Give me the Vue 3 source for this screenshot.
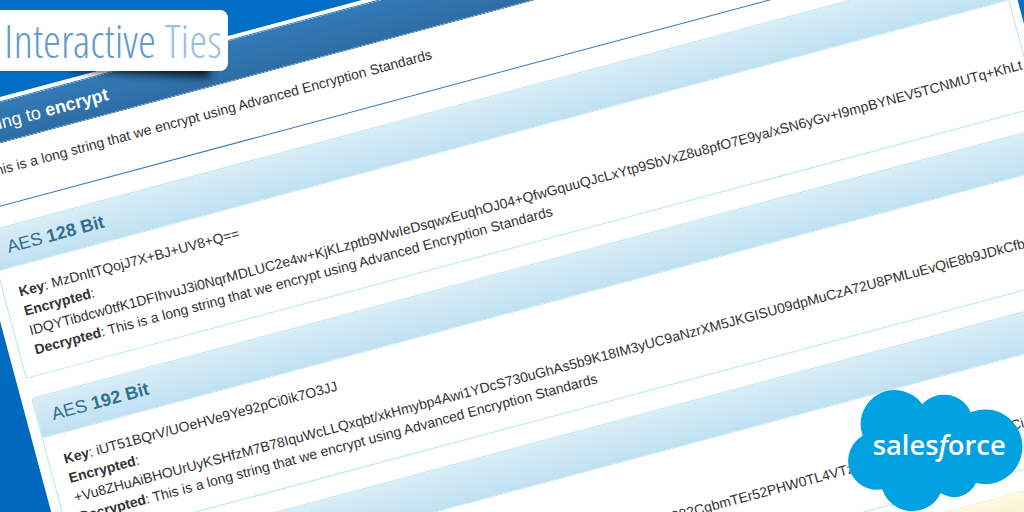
<script setup>
const source = 'This is a long string that we encrypt using Advanced Encryption Standards'

const results = [
  {
    bits: 128,
    key: 'MzDnItTQojJ7X+BJ+UV8+Q==',
    encrypted: 'IDQYTibdcw0tfK1DFIhvuJ3i0NqrMDLUC2e4w+KjKLzptb9WwIeDsqwxEuqhOJ04+QfwGquuQJcLxYtp9SbVxZ8u8pfO7E9ya/xSN6yGv+I9mpBYNEV5TCNMUTq+KhLt'
  },
  {
    bits: 192,
    key: 'iUT51BQrV/UOeHVe9Ye92pCi0ik7O3JJ',
    encrypted: '+Vu8ZHuAiBHOUrUyKSHfzM7B78IquWcLLQxqbt/xkHmybp4Awi1YDcS730uGhAs5b9K18IM3yUC9aNzrXM5JKGISU09dpMuCzA72U8PMLuEvQiE8b9JDkCfb'
  },
  {
    bits: 256,
    key: 'p8Kx2mQvT5uYh0sWc7RjZb3LfN6aGd1e',
    encrypted: 'n4Xw8aTzK2LrVYc0uPq7JmDhS5bEoGf1iRk9WtMsBx3NyZeHvCj6QdUpAl+gFO28rIwTcKL982CgbmTEr52PHW0TL4VTzq8RkN3vYs0JdWf5uHxkBCi'
  }
]
</script>

<template>
  <div class="stage">
    <main class="sheet">
      <section class="panel primary">
        <h3 class="heading">String to <b>encrypt</b></h3>
        <div class="body">
          <p class="source">{{ source }}</p>
        </div>
      </section>

      <section v-for="result in results" :key="result.bits" class="panel info">
        <h3 class="heading">AES <b>{{ result.bits }} Bit</b></h3>
        <div class="body">
          <div><b>Key</b>: {{ result.key }}</div>
          <div><b>Encrypted</b>:</div>
          <div class="cipher">{{ result.encrypted }}</div>
          <div><b>Decrypted</b>: {{ source }}</div>
        </div>
      </section>

      <section class="panel warning">
        <h3 class="heading">Notes</h3>
      </section>
    </main>

    <header class="brand">
      <span class="brand-name">Interactive <span class="brand-tail">Ties</span></span>
    </header>

    <svg class="cloud" viewBox="0 0 552 396" role="img" aria-label="salesforce">
      <path
        fill="#00a1e0"
        d="M68 167 A102 102 0 0 1 247 73 A87 87 0 0 1 392 97 A112 112 0 1 1 408 309 A72 72 0 0 1 302 339 A94 94 0 0 1 127 328 A87 87 0 0 1 68 167 Z"
      />
      <text class="cloud-text" x="98" y="224">sales<tspan font-style="italic">f</tspan>orce</text>
    </svg>
  </div>
</template>

<style>
body {
  margin: 0;
}
</style>

<style scoped>
.stage {
  position: relative;
  height: 100vh;
  min-height: 512px;
  overflow: hidden;
  background: linear-gradient(to top, #0068bd, #006fc5);
  font-family: "Liberation Sans", Arial, sans-serif;
  font-size: 14px;
  line-height: 20px;
  color: #333;
}

/* the result page, tilted behind the two logos */
.sheet {
  display: flow-root;
  box-sizing: border-box;
  width: calc(100vw + 42px);
  margin: 112px 0 0 -56px;
  padding: 4px 8px 10px 10px;
  background: #fff;
  transform: rotate(-15deg);
  transform-origin: 0 0;
}

.panel {
  margin-bottom: 20px;
  border: 1px solid;
  border-radius: 4px;
  background: #fff;
}

.heading {
  margin: 0;
  padding: 10px 15px;
  border-bottom: 1px solid;
  border-radius: 3px 3px 0 0;
  font-size: 18px;
  font-weight: 400;
  line-height: 20px;
}

.body {
  padding: 15px;
}

.source {
  margin: 0 0 10px;
}

.cipher {
  white-space: nowrap;
}

.primary {
  border-color: #337ab7;
}

.primary .heading {
  padding-bottom: 9px;
  border-color: #2e6da4;
  background: linear-gradient(#337ab7, #2e6da4);
  color: #fff;
}

.info,
.info .heading {
  border-color: #b4e6ef;
}

.info .heading {
  background: linear-gradient(#d9edf7, #c0e1f2);
  color: #31708f;
}

.warning,
.warning .heading {
  border-color: #faebcc;
}

.warning .heading {
  background: linear-gradient(#fcf8e3, #f8efc0);
  color: #8a6d3b;
}

.brand {
  position: absolute;
  top: 10px;
  left: 0;
  isolation: isolate;
}

/* lifted-corner shadow under the right end of the plate */
.brand::before {
  content: "";
  position: absolute;
  z-index: -1;
  right: 18px;
  bottom: -3px;
  width: 140px;
  height: 20px;
  background: rgba(0, 0, 0, 0.8);
  filter: blur(4px);
  transform: rotate(3deg);
}

.brand-name {
  display: block;
  padding: 0 6px 1px 4px;
  border-radius: 0 8px 8px 0;
  background: #fff;
  font-family: "Open Sans Condensed Light", "Open Sans Light Condensed", "Liberation Sans Narrow", "Open Sans", sans-serif;
  font-size: 46px;
  font-weight: 300;
  line-height: 60px;
  white-space: nowrap;
  color: #6699cc;
}

.brand-tail {
  color: #99bfe6;
}

.cloud {
  position: absolute;
  right: 0;
  bottom: 0;
  width: 184px;
  height: 132px;
}

.cloud-text {
  font-family: "Open Sans", sans-serif;
  font-size: 82px;
  font-weight: 600;
  fill: #fff;
}
</style>
